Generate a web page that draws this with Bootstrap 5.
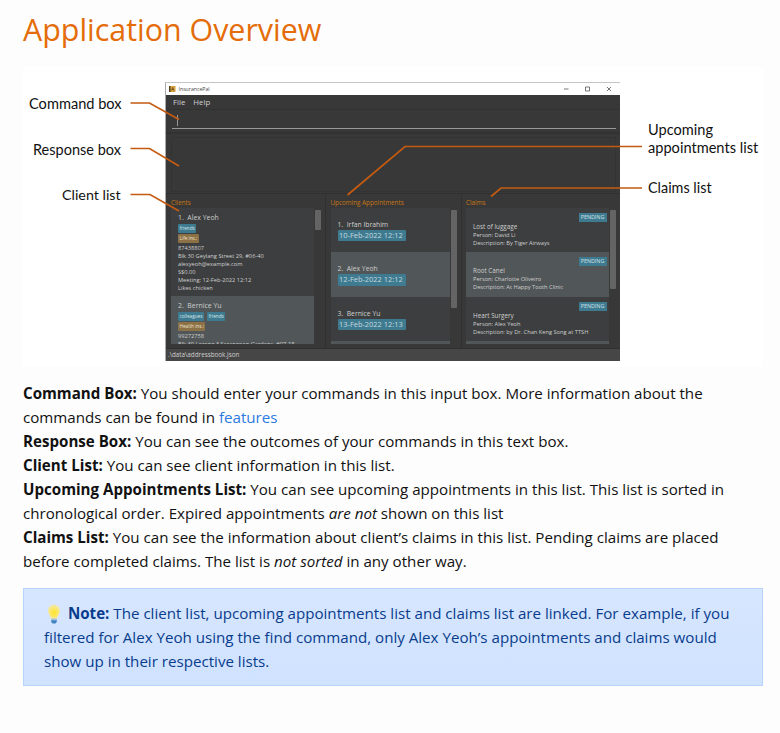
<!DOCTYPE html>
<html lang="en">
<head>
<meta charset="utf-8">
<meta name="viewport" content="width=device-width, initial-scale=1">
<title>Application Overview</title>
<link href="https://cdn.jsdelivr.net/npm/bootstrap@5.3.0/dist/css/bootstrap.min.css" rel="stylesheet">
<style>
body{background:#fdfdfd;color:#111;font-family:"Open Sans","Noto Sans",sans-serif;font-size:15.13px;line-height:24px}
.page{padding:6px 17px 0 23px}
h1{color:#e46c0a;font-size:30.4px;line-height:48px;margin:0 0 13px;font-weight:400}
.guide{width:740px;margin-top:14px;white-space:nowrap}
.guide a{color:#2a7ae2}
.note{width:740px;height:98px;margin-top:15px;padding:12px 19px 12px 20px;border:1px solid #b6d4fe;border-radius:0;background:linear-gradient(#d7e6ff,#cfe2ff);color:#083c8c;white-space:nowrap}
.bulb{width:18px;height:20px;margin:0 2px 0 0;vertical-align:-5px}
/* annotated figure */
.figure-box{width:740px;height:300px;background:#fff}
.callout{font-family:Lato,"Liberation Sans",sans-serif;font-size:14.6px;line-height:18px;color:#111;white-space:nowrap}
.c-cmd{left:6px;top:28px}.c-res{left:10px;top:74px;font-size:14.5px}.c-cli{left:39px;top:119px;font-size:14.3px}
.c-upc{left:625px;top:54px}.c-cla{left:625px;top:112px;font-size:14.4px}
.leaders{left:0;top:0}
.app-window{left:142px;top:15px;width:455px;height:279px;background:#383838;color:#cfcfcf;font-size:5.7px;line-height:8px;white-space:nowrap;border-top:1px solid #c4c4c4;border-left:1px solid #aaa}
.title-strip{height:12px;background:#fff;color:#444;padding:0 7px 0 3px;font-size:5.2px;gap:3px}
.menu-strip{height:15px;padding-left:7px;font-size:7.8px;border-bottom:1px solid #323232}
.command{height:24px;border-bottom:2px solid #323232;padding:0 4px 0 5.5px}
.command-line{height:19px;border-bottom:1px solid #999;padding:5px 0 0 5px}
.caret{width:1px;height:11px;background:#999}
.response{height:55px;margin:3px 4px 1px 5px;border:1px solid #333}
.panels{height:156px;border-top:1px solid #303030}
.pane{padding:4px 0 0 5px;border-right:1.5px solid #303030}
.pane-title{height:10px;line-height:10px;color:#c77715;font-size:6.3px}
.pane-clients{width:160px}.pane-upcoming{width:135.5px;padding-left:4.5px}.pane-claims{width:158.5px;border:0;padding-left:4.5px}
.items{height:136px;overflow:hidden}
.item{background:#3c3e3f;padding-left:7px;height:44.5px}
.item:nth-child(even){background:#515658}
.w-clients{width:142.5px}.w-upcoming{width:119px}.w-claims{width:142.5px}
.w-clients .item{height:88px;padding-top:5.5px}
.w-upcoming .item{padding-top:12px}
.w-claims .item{padding:5px 2px 0 7px}
.person{font-size:6.9px;line-height:9px;height:11px;white-space:pre}
.w-upcoming .person{height:10px;font-size:6.8px}
.chips{height:10px;display:flex;gap:3px}
.chips+.chips{height:9.5px}
.chip{height:8.5px;line-height:8px;background:#3e7b91;border-radius:1px;padding:0 1.5px;font-size:4.7px;color:#d8e4e8}
.chip-ins{background:#8d7146;color:#eee2cc}
.when{display:block;width:68px;height:11.5px;line-height:11px;background:#3e7b91;border-radius:1px;padding-left:1.5px;font-size:7.45px;color:#c6d8de}
.state{display:block;margin-left:auto;width:28px;height:9px;line-height:9px;background:#3e7b91;text-align:center;font-size:5.4px;color:#d3e1e5}
.claim-name{font-size:6.3px;line-height:9px}
.thumb{width:5.5px;background:#646464;border-radius:1px;margin:2px 0 0 1.5px}
.t1{height:20px}.t2{height:98px}.t3{height:79px}
.status{height:13px;background:#464646;border-top:1px solid #303030;line-height:12px;padding-left:2px;font-size:6.3px}
</style>
<script src="https://cdn.jsdelivr.net/npm/bootstrap@5.3.0/dist/js/bootstrap.bundle.min.js"></script>
</head>
<body>
<main class="page">
<h1>Application Overview</h1>
<div class="figure-box position-relative">
  <div class="app-window position-absolute d-flex flex-column">
    <div class="title-strip d-flex align-items-center">
      <svg width="6.5" height="6" viewBox="0 0 13 12"><path fill="#d8a241" d="M0 0h13v12H0z"/><path fill="#51401f" d="M0 0h3v12H0z"/><path d="M5 9l2.500-6L10 9M6 7h3" fill="none" stroke="#51401f" stroke-width="1.3"/></svg>
      <span>InsurancePal</span>
      <svg class="ms-auto" width="52" height="8" viewBox="0 0 52 8" fill="none" stroke="#555" stroke-width=".8"><path d="M3 4h4.500M46 2l4 4m0-4l-4 4"/><path d="M24.500 2h4v4h-4z"/></svg>
    </div>
    <div class="menu-strip d-flex align-items-center"><span>File</span><span class="ms-2">Help</span></div>
    <div class="command"><div class="command-line"><div class="caret"></div></div></div>
    <div class="response"></div>
    <div class="panels d-flex">
      <section class="pane pane-clients"><div class="pane-title">Clients</div>
        <div class="d-flex"><div class="items w-clients">
          <div class="item"><div class="person">1.  Alex Yeoh</div><div class="chips"><span class="chip">friends</span></div><div class="chips"><span class="chip chip-ins">Life ins.:</span></div>
            <div>87438807</div><div>Blk 30 Geylang Street 29, #06-40</div><div>alexyeoh@example.com</div><div>S$0.00</div><div>Meeting: 12-Feb-2022 12:12</div><div>Likes chicken</div></div>
          <div class="item"><div class="person">2.  Bernice Yu</div><div class="chips"><span class="chip">colleagues</span><span class="chip">friends</span></div><div class="chips"><span class="chip chip-ins">Health ins.:</span></div>
            <div>99272758</div><div>Blk 30 Lorong 3 Serangoon Gardens, #07-18</div></div>
        </div><div class="thumb t1"></div></div>
      </section>
      <section class="pane pane-upcoming"><div class="pane-title">Upcoming Appointments</div>
        <div class="d-flex"><div class="items w-upcoming">
          <div class="item"><div class="person">1.  Irfan Ibrahim</div><span class="when">10-Feb-2022 12:12</span></div>
          <div class="item"><div class="person">2.  Alex Yeoh</div><span class="when">12-Feb-2022 12:12</span></div>
          <div class="item"><div class="person">3.  Bernice Yu</div><span class="when">13-Feb-2022 12:13</span></div>
          <div class="item"></div>
        </div><div class="thumb t2"></div></div>
      </section>
      <section class="pane pane-claims"><div class="pane-title">Claims</div>
        <div class="d-flex"><div class="items w-claims">
          <div class="item"><span class="state">PENDING</span><div class="claim-name">Lost of luggage</div><div>Person: David Li</div><div>Description: By Tiger Airways</div></div>
          <div class="item"><span class="state">PENDING</span><div class="claim-name">Root Canel</div><div>Person: Charlotte Oliveiro</div><div>Description: At Happy Tooth Clinic</div></div>
          <div class="item"><span class="state">PENDING</span><div class="claim-name">Heart Surgery</div><div>Person: Alex Yeoh</div><div>Description: by Dr. Chan Keng Song at TTSH</div></div>
          <div class="item"></div>
        </div><div class="thumb t3"></div></div>
      </section>
    </div>
    <div class="status">.\data\addressbook.json</div>
  </div>
  <svg class="leaders position-absolute" width="740" height="300" viewBox="0 0 740 300" fill="none" stroke="#c55a11" stroke-width="1.7">
    <path d="M107.500 36H126.500L156 52.500M107.500 81.500H126.500L156 99M107.500 127.500H127L156 144M619 79.500H382L324.500 128M619 121H478L468 129.500"/>
  </svg>
  <div class="callout c-cmd position-absolute">Command box</div>
  <div class="callout c-res position-absolute">Response box</div>
  <div class="callout c-cli position-absolute">Client list</div>
  <div class="callout c-upc position-absolute">Upcoming<br>appointments list</div>
  <div class="callout c-cla position-absolute">Claims list</div>
</div>
<div class="guide">
  <div><b>Command Box:</b> You should enter your commands in this input box. More information about the<br>commands can be found in <a class="text-decoration-none" href="#features">features</a></div>
  <div><b>Response Box:</b> You can see the outcomes of your commands in this text box.</div>
  <div><b>Client List:</b> You can see client information in this list.</div>
  <div><b>Upcoming Appointments List:</b> You can see upcoming appointments in this list. This list is sorted in<br>chronological order. Expired appointments <i>are not</i> shown on this list</div>
  <div><b>Claims List:</b> You can see the information about client’s claims in this list. Pending claims are placed<br>before completed claims. The list is <i>not sorted</i> in any other way.</div>
</div>
<div class="note alert mb-0"><svg class="bulb" viewBox="0 0 18 20"><defs><radialGradient id="glow" cx=".5" cy=".58"><stop offset="0" stop-color="#ffe226"/><stop offset=".6" stop-color="#fbe765"/><stop offset="1" stop-color="#f3e8a0"/></radialGradient></defs><path fill="url(#glow)" d="M10 .8c3.500 0 6 2.500 6 5.700 0 3.300-2.400 4.700-3 8H7c-.6-3.300-3-4.700-3-8C4 3.300 6.500.8 10 .8z"/><path fill="#a9bfd0" d="M7.200 14.500h5.600v2H7.200z"/><path fill="#3f83c4" d="M7.200 16.300h5.600v1.500L11.500 19.400h-3l-1.300-1.600z"/></svg> <b>Note:</b> The client list, upcoming appointments list and claims list are linked. For example, if you<br>filtered for Alex Yeoh using the find command, only Alex Yeoh’s appointments and claims would<br>show up in their respective lists.</div>
</main>
</body>
</html>
